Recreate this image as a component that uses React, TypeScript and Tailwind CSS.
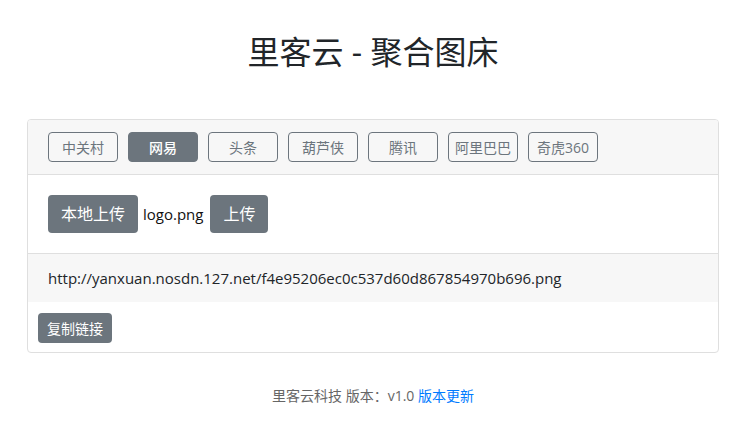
import React from "react";

const font = { fontFamily: '"Open Sans", "Noto Sans CJK SC", sans-serif' };

export default function App() {
  const tabs = ["中关村", "网易", "头条", "葫芦侠", "腾讯", "阿里巴巴", "奇虎360"];
  return (
    <div className="w-[746px] h-[427px] bg-white text-[#212529]" style={font}>
      <div className="flex justify-center pt-[29px] h-[119px]">
        <h1 className="text-[32px] leading-[46px] font-normal text-[#212529]">里客云 - 聚合图床</h1>
      </div>
      <div className="mx-[27px] border border-[#dfdfdf] rounded-[4px] overflow-hidden">
        <div className="bg-[#f7f7f7] border-b border-[#dfdfdf] px-[20px] py-[12px] flex gap-[10px]">
          {tabs.map((t, i) => (
            <button
              key={t}
              className={
                i === 1
                  ? "w-[70px] h-[30px] rounded-[4px] border border-[#6c757d] bg-[#6c757d] text-white text-[14px] font-medium flex items-center justify-center whitespace-nowrap"
                  : "w-[70px] h-[30px] rounded-[4px] border border-[#6c757d] text-[#6c757d] text-[14px] flex items-center justify-center whitespace-nowrap"
              }
            >
              {t}
            </button>
          ))}
        </div>
        <div className="px-[20px] py-[20px] flex items-center border-b border-[#dfdfdf]">
          <button className="w-[90px] h-[38px] rounded-[4px] bg-[#6c757d] text-white text-[16px] flex items-center justify-center">本地上传</button>
          <span className="text-[15px] ml-[5px] mr-[7px] text-[#111]">logo.png</span>
          <button className="w-[58px] h-[38px] rounded-[4px] bg-[#6c757d] text-white text-[16px] flex items-center justify-center">上传</button>
        </div>
        <div className="bg-[#f7f7f7] h-[48px] px-[20px] flex items-center text-[15px] text-[#212529]">
          http://yanxuan.nosdn.127.net/f4e95206ec0c537d60d867854970b696.png
        </div>
        <div className="px-[10px] pt-[11px] pb-[9px]">
          <button className="w-[74px] h-[30px] rounded-[4px] bg-[#6c757d] text-white text-[14px] flex items-center justify-center">复制链接</button>
        </div>
      </div>
      <div className="flex justify-center mt-[32px] text-[14px] text-[#666]">
        <span>里客云科技 版本：v1.0 <a className="text-[#007bff]">版本更新</a></span>
      </div>
    </div>
  );
}
